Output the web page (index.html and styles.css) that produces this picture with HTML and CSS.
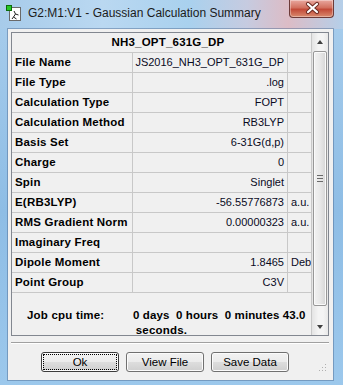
FILE: index.html
```html
<!DOCTYPE html>
<html lang="en">
<head>
    <meta charset="UTF-8">
    <title>G2:M1:V1 - Gaussian Calculation Summary</title>
    <link rel="stylesheet" href="styles.css">
</head>
<body>
<div class="window">
    <div class="titlebar">
        <svg class="app-icon" viewBox="0 0 16 16">
            <rect x="3.5" y="2.5" width="11" height="13" fill="#fff" stroke="#6a6a6a"/>
            <path d="M8 6 L9.5 9 L7.5 12 M9.5 9 L12.5 10 M7.5 12 L6 14 M7.5 12 L10.5 14" stroke="#222" fill="none"/>
            <rect x="0.5" y="0.5" width="5" height="5" fill="#27c727" stroke="#0b6b0b"/>
        </svg>
        <span class="title">G2:M1:V1 - Gaussian Calculation Summary</span>
        <div class="close-btn">
            <svg viewBox="0 0 45 18" width="45" height="18">
                <path d="M18 5 L27 13 M27 5 L18 13" stroke="#6b2a22" stroke-width="4.2" stroke-linecap="round"/>
                <path d="M18 5 L27 13 M27 5 L18 13" stroke="#fff" stroke-width="2.2" stroke-linecap="round"/>
            </svg>
        </div>
    </div>

    <div class="client">
        <div class="panel">
            <div class="grid">
                <div class="grid-head">NH3_OPT_631G_DP</div>
                <div class="row"><div class="label">File Name</div><div class="value">JS2016_NH3_OPT_631G_DP</div><div class="unit"></div></div>
                <div class="row"><div class="label">File Type</div><div class="value">.log</div><div class="unit"></div></div>
                <div class="row"><div class="label">Calculation Type</div><div class="value">FOPT</div><div class="unit"></div></div>
                <div class="row"><div class="label">Calculation Method</div><div class="value">RB3LYP</div><div class="unit"></div></div>
                <div class="row"><div class="label">Basis Set</div><div class="value">6-31G(d,p)</div><div class="unit"></div></div>
                <div class="row"><div class="label">Charge</div><div class="value">0</div><div class="unit"></div></div>
                <div class="row"><div class="label">Spin</div><div class="value">Singlet</div><div class="unit"></div></div>
                <div class="row"><div class="label">E(RB3LYP)</div><div class="value">-56.55776873</div><div class="unit">a.u.</div></div>
                <div class="row"><div class="label">RMS Gradient Norm</div><div class="value">0.00000323</div><div class="unit">a.u.</div></div>
                <div class="row"><div class="label">Imaginary Freq</div><div class="value"></div><div class="unit"></div></div>
                <div class="row"><div class="label">Dipole Moment</div><div class="value">1.8465</div><div class="unit">Deb</div></div>
                <div class="row"><div class="label">Point Group</div><div class="value">C3V</div><div class="unit"></div></div>
                <div class="cpu">
                    <div class="cpu-line"><span class="cpu-label">Job cpu time:</span><span class="cpu-value">0 days  0 hours  0 minutes 43.0</span></div>
                    <div class="cpu-line2">seconds.</div>
                </div>
            </div>
            <div class="scrollbar">
                <div class="sb-arrow"><span class="tri-up"></span></div>
                <div class="sb-thumb"><span class="grip-lines"></span></div>
                <div class="sb-space"></div>
                <div class="sb-arrow"><span class="tri-down"></span></div>
            </div>
        </div>

        <div class="separator"></div>

        <div class="buttons">
            <button class="btn btn-default">Ok</button>
            <button class="btn">View File</button>
            <button class="btn">Save Data</button>
            <svg class="size-grip" viewBox="0 0 8 8" width="8" height="8">
                <rect x="6" y="0" width="1" height="1" fill="#b0b0b0"/>
                <rect x="3" y="3" width="1" height="1" fill="#b0b0b0"/>
                <rect x="6" y="3" width="1" height="1" fill="#b0b0b0"/>
                <rect x="0" y="6" width="1" height="1" fill="#b0b0b0"/>
                <rect x="3" y="6" width="1" height="1" fill="#b0b0b0"/>
                <rect x="6" y="6" width="1" height="1" fill="#b0b0b0"/>
            </svg>
        </div>
    </div>
</div>
</body>
</html>
```

FILE: styles.css
```css
/* Windows 7 style dialog */
* {
    box-sizing: border-box;
}

body {
    margin: 0;
    width: 343px;
    height: 385px;
    overflow: hidden;
    font-family: 'Liberation Sans', Arial, sans-serif;
    font-size: 11.5px;
    color: #000;
}

.window {
    width: 343px;
    height: 385px;
    display: flex;
    flex-direction: column;
    background: linear-gradient(to bottom, #a8cdec, #8ebde5 55%, #9cc8ec);
}

/* Title bar */
.titlebar {
    height: 29px;
    display: flex;
    align-items: flex-start;
    background: linear-gradient(to right, #a7cbea 0%, #bad8f1 30%, #a9d1ee 55%, #c6cbe0 72%, #dcbcc6 84%, #b5cfe9 100%);
}

.app-icon {
    width: 16px;
    height: 16px;
    margin: 5px 0 0 6px;
}

.title {
    margin: 5px 0 0 6px;
    font-family: 'Liberation Sans', Arial, sans-serif;
    font-size: 12px;
    line-height: 16px;
    color: #1b1b1b;
}

.close-btn {
    margin-left: auto;
    margin-right: 9px;
    width: 45px;
    height: 18px;
    border: 1px solid #6d3a38;
    border-top: none;
    border-radius: 0 0 4px 4px;
    background: linear-gradient(to bottom, #e9a89f 0%, #d2705f 45%, #c24a38 55%, #d98a6e 100%);
    box-shadow: inset 0 0 0 1px rgba(255, 255, 255, 0.35);
}

.close-btn svg {
    display: block;
    margin-top: -1px;
}

/* Client area */
.client {
    flex: 1;
    margin: 0 10px 5px 8px;
    padding: 3px 4px 0 3px;
    display: flex;
    flex-direction: column;
    background-color: #f0f0f0;
    box-shadow: 0 0 0 1px rgba(70, 100, 140, 0.45);
}

.panel {
    height: 304px;
    display: flex;
    border: 1px solid #828790;
    background-color: #f0f0f0;
}

.grid {
    width: 300px;
    flex-shrink: 0;
    border-right: 1px solid #c8c8c8;
    overflow: hidden;
}

.grid-head {
    height: 20px;
    padding-left: 13px;
    line-height: 19px;
    text-align: center;
    font-weight: bold;
    letter-spacing: 0.2px;
    border-bottom: 1px solid #c8c8c8;
}

.row {
    height: 20px;
    display: flex;
    line-height: 19px;
    border-bottom: 1px solid #c8c8c8;
}

.label {
    width: 121px;
    flex-shrink: 0;
    padding-left: 3px;
    font-weight: bold;
    letter-spacing: 0.2px;
    white-space: nowrap;
    border-right: 1px solid #c8c8c8;
}

.value {
    width: 155px;
    flex-shrink: 0;
    padding-right: 3px;
    font-size: 11px;
    text-align: right;
    white-space: nowrap;
    color: #0a0a1e;
    border-right: 1px solid #c8c8c8;
}

.unit {
    flex: 1;
    padding-left: 3px;
    font-size: 11px;
    white-space: nowrap;
    overflow: hidden;
    color: #0a0a1e;
}

.cpu {
    padding-top: 15px;
    line-height: 15px;
    font-weight: bold;
}

.cpu-line {
    display: flex;
}

.cpu-label {
    width: 121px;
    flex-shrink: 0;
    padding-left: 15px;
    letter-spacing: 0.2px;
}

.cpu-value {
    white-space: pre;
    letter-spacing: 0.1px;
}

.cpu-line2 {
    text-align: center;
    letter-spacing: 0.2px;
}

/* Scrollbar */
.scrollbar {
    flex: 1;
    display: flex;
    flex-direction: column;
    background: linear-gradient(to right, #e4e4e4, #f4f4f4 40%, #f4f4f4 70%, #e8e8e8);
}

.sb-arrow {
    height: 17px;
    display: flex;
    align-items: center;
    justify-content: center;
}

.tri-up {
    border-left: 3px solid transparent;
    border-right: 3px solid transparent;
    border-bottom: 4px solid #404040;
}

.tri-down {
    border-left: 3px solid transparent;
    border-right: 3px solid transparent;
    border-top: 4px solid #404040;
}

.sb-thumb {
    height: 255px;
    margin: 1px 1px 0 1px;
    display: flex;
    align-items: center;
    justify-content: center;
    border: 1px solid #979797;
    border-radius: 2px;
    background: linear-gradient(to right, #f2f2f2, #e8e8e8 50%, #d6d6d6);
    box-shadow: inset 0 0 0 1px #fafafa;
}

.grip-lines {
    width: 6px;
    height: 7px;
    border-top: 1px solid #6a6a6a;
    border-bottom: 1px solid #6a6a6a;
    background: linear-gradient(#6a6a6a, #6a6a6a) center / 6px 1px no-repeat;
}

.sb-space {
    flex: 1;
}

/* Bottom buttons */
.separator {
    height: 2px;
    margin-top: 6px;
    border-top: 1px solid #a0a0a0;
    border-bottom: 1px solid #ffffff;
}

.buttons {
    margin-top: 8px;
    padding-left: 30px;
    display: flex;
    align-items: flex-end;
    gap: 7px;
}

.btn {
    width: 78px;
    height: 20px;
    padding: 0;
    font-family: 'Liberation Sans', Arial, sans-serif;
    font-size: 11.5px;
    color: #000;
    border: 1px solid #707070;
    border-radius: 3px;
    background: linear-gradient(to bottom, #f2f2f2 0%, #ebebeb 50%, #dddddd 51%, #cfcfcf 100%);
    box-shadow: inset 0 0 0 1px #fbfbfb;
}

.btn-default {
    border-color: #3c3c3c;
    outline: 1px dotted #000;
    outline-offset: -3px;
}

.size-grip {
    margin-left: auto;
    margin-right: 2px;
}
```
